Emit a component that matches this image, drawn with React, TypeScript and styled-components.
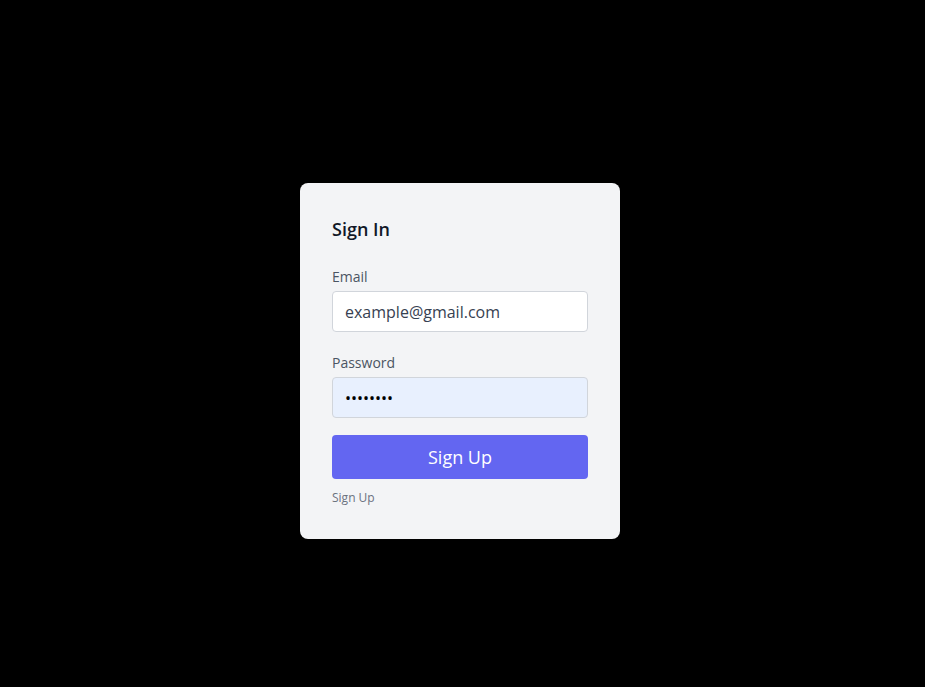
import React from "react";
import styled, { createGlobalStyle } from "styled-components";

const Global = createGlobalStyle`
  html, body { margin: 0; padding: 0; background: #000; }
  body { font-family: "Open Sans", "Noto Sans", sans-serif; }
  * { box-sizing: border-box; }
`;

const Page = styled.div`
  width: 925px;
  height: 687px;
  background: #000;
  padding: 183px 0 0 300px;
`;

const Card = styled.form`
  width: 320px;
  height: 356px;
  background: #f3f4f6;
  border-radius: 8px;
  padding: 32px;
  display: flex;
  flex-direction: column;
`;

const Title = styled.h2`
  margin: 0 0 24px;
  font-size: 18px;
  line-height: 28px;
  font-weight: 600;
  color: #111827;
`;

const Field = styled.div<{ $mb: number }>`
  display: flex;
  flex-direction: column;
  gap: 4px;
  margin-bottom: ${(p) => p.$mb}px;
`;

const Label = styled.label`
  font-size: 14px;
  line-height: 20px;
  color: #4b5563;
`;

const Input = styled.input<{ $filled?: boolean }>`
  width: 256px;
  height: 41px;
  border: 1px solid #d1d5db;
  border-radius: 4px;
  padding: 0 12px;
  font-family: inherit;
  font-size: 16px;
  color: ${(p) => (p.$filled ? "#000" : "#374151")};
  background: ${(p) => (p.$filled ? "#e8f0fe" : "#fff")};
  outline: none;
`;

const Button = styled.button`
  width: 256px;
  height: 44px;
  border: none;
  border-radius: 4px;
  background: #6366f1;
  color: #fff;
  font-family: inherit;
  font-size: 18px;
  margin-bottom: 11px;
`;

const Small = styled.span`
  font-size: 12px;
  line-height: 16px;
  color: #6b7280;
`;

export default function App() {
  return (
    <>
      <Global />
      <Page>
        <Card onSubmit={(e) => e.preventDefault()}>
          <Title>Sign In</Title>
          <Field $mb={21}>
            <Label>Email</Label>
            <Input type="email" defaultValue="example@gmail.com" />
          </Field>
          <Field $mb={17}>
            <Label>Password</Label>
            <Input type="password" defaultValue="password" $filled />
          </Field>
          <Button type="submit">Sign Up</Button>
          <Small>Sign Up</Small>
        </Card>
      </Page>
    </>
  );
}
